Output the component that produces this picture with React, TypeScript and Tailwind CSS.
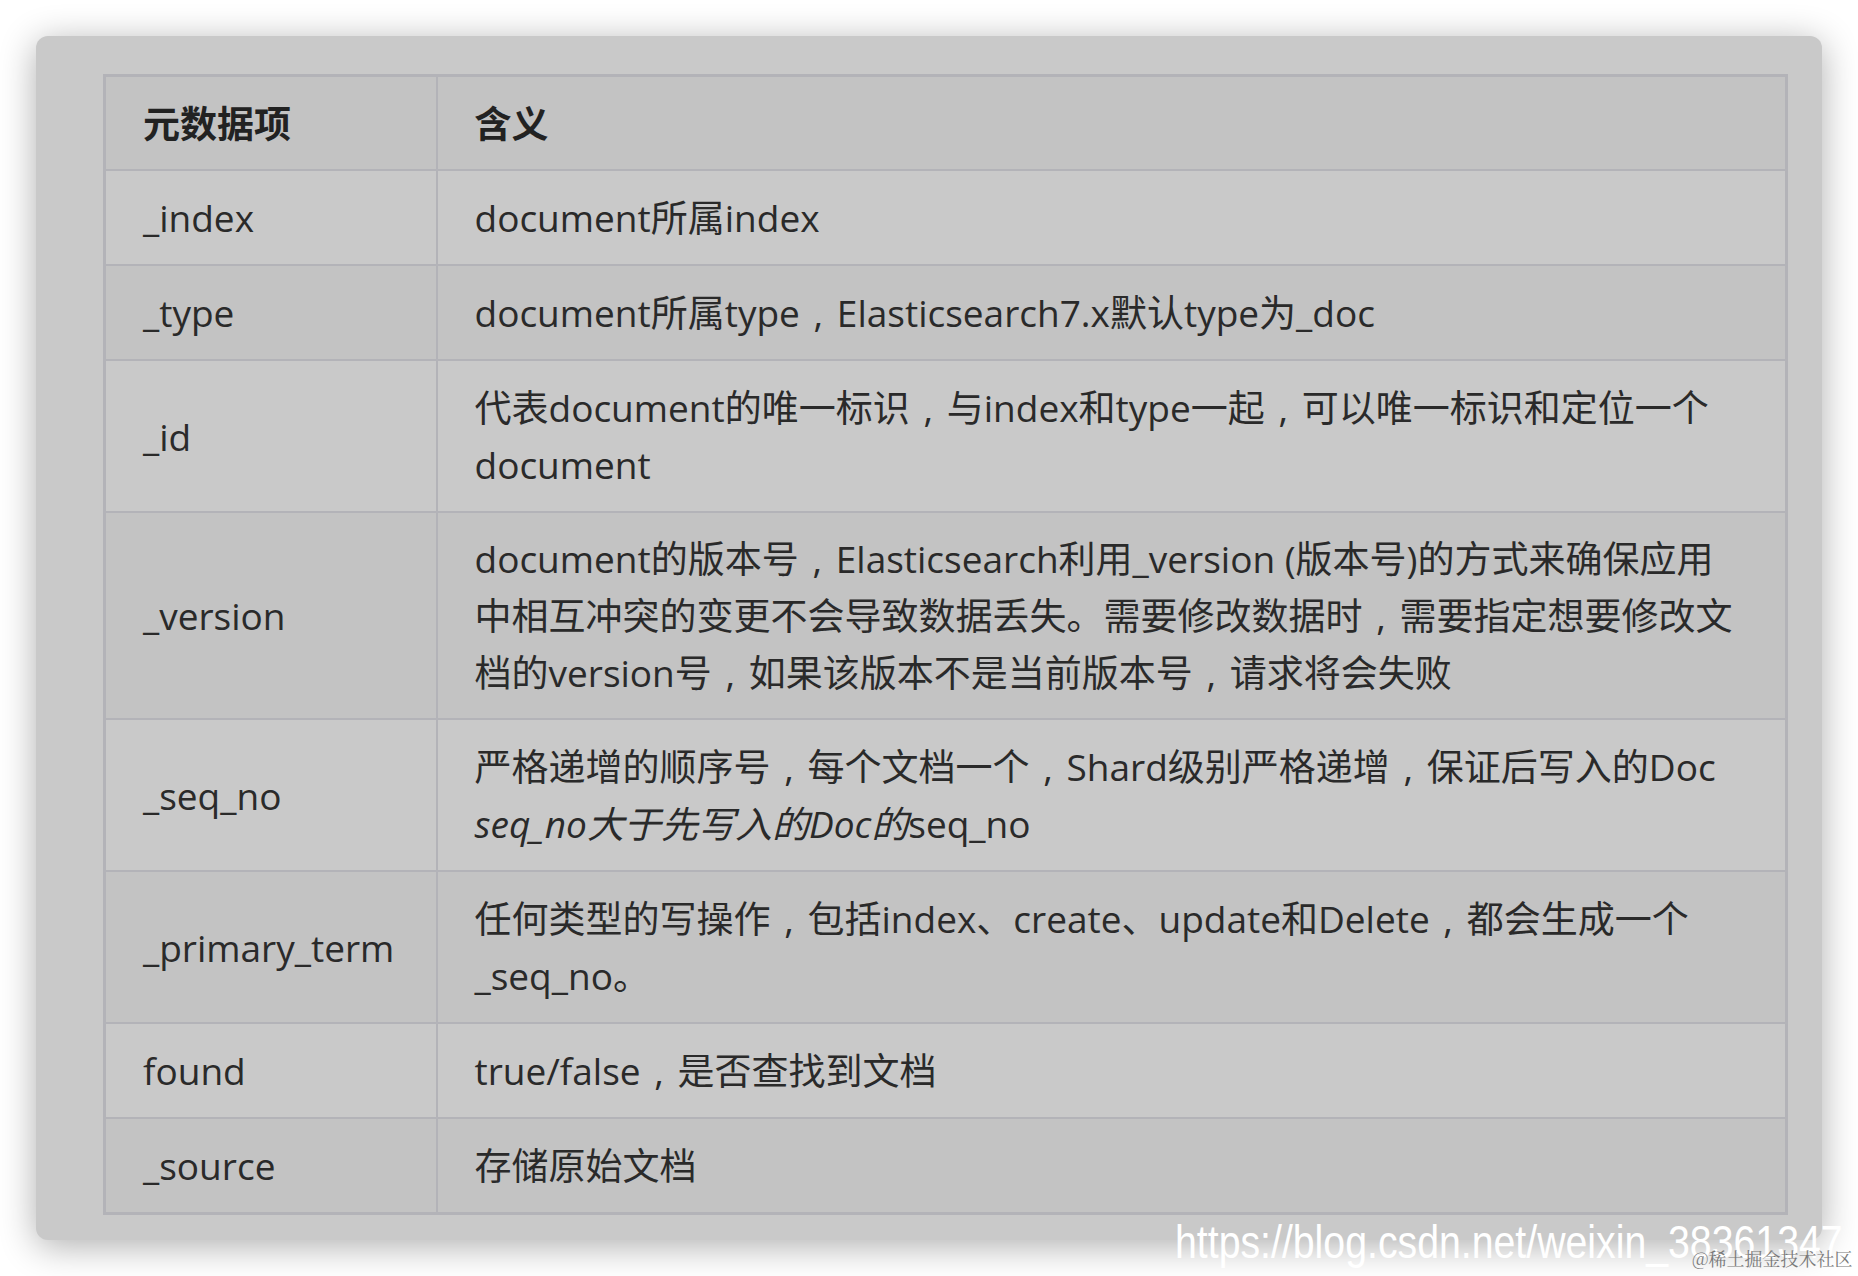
import React from "react";

function T({ s }: { s: string }) {
  const parts = s.split(/(，)/);
  return (
    <>
      {parts.map((p, i) =>
        p === "，" ? (
          <span key={i} className="inline-block w-[37px] text-center">
            ,
          </span>
        ) : (
          <React.Fragment key={i}>{p}</React.Fragment>
        )
      )}
    </>
  );
}

type Row = { k: string; v: React.ReactNode[]; dark: boolean };

const rows: Row[] = [
  { k: "_index", v: ["document所属index"], dark: false },
  { k: "_type", v: ["document所属type，Elasticsearch7.x默认type为_doc"], dark: true },
  {
    k: "_id",
    v: ["代表document的唯一标识，与index和type一起，可以唯一标识和定位一个", "document"],
    dark: false,
  },
  {
    k: "_version",
    v: [
      "document的版本号，Elasticsearch利用_version (版本号)的方式来确保应用",
      "中相互冲突的变更不会导致数据丢失。需要修改数据时，需要指定想要修改文",
      "档的version号，如果该版本不是当前版本号，请求将会失败",
    ],
    dark: true,
  },
  {
    k: "_seq_no",
    v: [
      "严格递增的顺序号，每个文档一个，Shard级别严格递增，保证后写入的Doc",
      <>
        <i>seq_no大于先写入的Doc的</i>seq_no
      </>,
    ],
    dark: false,
  },
  {
    k: "_primary_term",
    v: ["任何类型的写操作，包括index、create、update和Delete，都会生成一个", "_seq_no。"],
    dark: true,
  },
  { k: "found", v: ["true/false，是否查找到文档"], dark: false },
  { k: "_source", v: ["存储原始文档"], dark: true },
];

export default function App() {
  return (
    <div className="relative w-[1858px] h-[1276px] bg-white overflow-hidden font-['Open_Sans','Noto_Sans_CJK_SC',sans-serif] text-[#2a2a2a]">
      <div className="pt-[36px] pl-[36px]">
        <div className="w-[1786px] h-[1204px] rounded-[12px] bg-[#c9c9c9] shadow-[0_6px_36px_rgba(0,0,0,0.32)] pl-[67px] pt-[38px]">
          <table className="w-[1685px] table-fixed border-collapse border-[3px] border-[#b3b3b8] text-[37px] leading-[57px]">
            <colgroup>
              <col className="w-[332px]" />
              <col />
            </colgroup>
            <thead>
              <tr className="bg-[#c3c3c3]">
                <th className="border-2 border-[#b3b3b8] text-left font-bold pl-[37px] py-[17.5px] text-[#222]">
                  <div className="h-[57px] overflow-visible">元数据项</div>
                </th>
                <th className="border-2 border-[#b3b3b8] text-left font-bold pl-[37px] py-[17.5px] text-[#222]">
                  <div className="h-[57px] overflow-visible">含义</div>
                </th>
              </tr>
            </thead>
            <tbody>
              {rows.map((r) => {
                const py = r.v.length === 3 ? "py-[17px]" : "py-[18px]";
                return (
                  <tr key={r.k} className={r.dark ? "bg-[#c3c3c3]" : "bg-[#c9c9c9]"}>
                    <td className={`border-2 border-[#b3b3b8] pl-[37px] align-middle whitespace-nowrap ${py}`}>
                      <div className="h-[57px] overflow-visible">{r.k}</div>
                    </td>
                    <td className={`border-2 border-[#b3b3b8] pl-[37px] align-middle whitespace-nowrap ${py}`}>
                      {r.v.map((line, i) => (
                        <div key={i} className="h-[57px] overflow-visible">
                          {typeof line === "string" ? <T s={line} /> : line}
                        </div>
                      ))}
                    </td>
                  </tr>
                );
              })}
            </tbody>
          </table>
        </div>
      </div>
      <div className="absolute left-[1175px] top-[1214px] origin-left scale-x-[0.835] whitespace-nowrap font-['Liberation_Sans',Arial,sans-serif] text-[47px] leading-[56px] text-white">
        https://blog.csdn.net/weixin_38361347
      </div>
      <div className="absolute left-[1692px] top-[1247px] whitespace-nowrap font-['Noto_Serif_CJK_SC','Noto_Sans_CJK_SC',serif] text-[18px] leading-[22px] text-[#7a7a7a]">
        @稀土掘金技术社区
      </div>
    </div>
  );
}
